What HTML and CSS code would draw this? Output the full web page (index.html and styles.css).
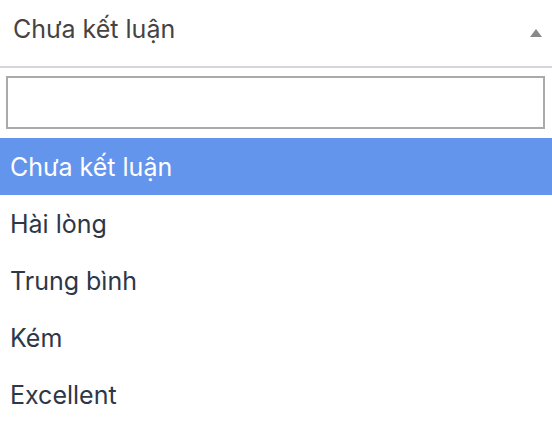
FILE: index.html
```html
<!DOCTYPE html>
<html lang="vi">
<head>
  <meta charset="UTF-8">
  <meta name="viewport" content="width=device-width, initial-scale=1.0">
  <title>Chọn kết luận</title>
  <link rel="stylesheet" href="styles.css">
</head>
<body>
  <div class="select">
    <div class="selection">
      <span class="selection-text">Chưa kết luận</span>
      <span class="arrow"></span>
    </div>

    <div class="dropdown">
      <div class="search">
        <input type="text" class="search-field">
      </div>
      <ul class="options">
        <li class="option highlighted">Chưa kết luận</li>
        <li class="option">Hài lòng</li>
        <li class="option">Trung bình</li>
        <li class="option">Kém</li>
        <li class="option">Excellent</li>
      </ul>
    </div>
  </div>
</body>
</html>
```

FILE: styles.css
```css
/* select */
body {
  margin: 0;
  padding: 0;
  font-family: 'Inter', 'Noto Sans', sans-serif;
  background: #fff;
}

.select {
  width: 552px;
}

.selection {
  display: flex;
  align-items: center;
  justify-content: space-between;
  padding: 0 10px 0 13px;
  border-bottom: 2px solid #d3d7dc;
  box-sizing: border-box;
  height: 68px;
}

.selection-text {
  font-size: 25px;
  color: #444;
  margin-top: -8px;
}

.arrow {
  width: 0;
  height: 0;
  border-left: 6.5px solid transparent;
  border-right: 6.5px solid transparent;
  border-bottom: 8px solid #888;
  margin-top: 0;
}

.search {
  padding: 8px 7px 9px 6px;
}

.search-field {
  display: block;
  width: 100%;
  height: 53px;
  box-sizing: border-box;
  border: 2px solid #aaa;
  outline: none;
  margin: 0;
  font-size: 20px;
}

.options {
  list-style: none;
  margin: 0;
  padding: 0;
}

.option {
  height: 57px;
  display: flex;
  align-items: center;
  padding-left: 10px;
  font-size: 25px;
  color: #2d3748;
}

.option.highlighted {
  background: #6495ed;
  color: #fff;
}
```
